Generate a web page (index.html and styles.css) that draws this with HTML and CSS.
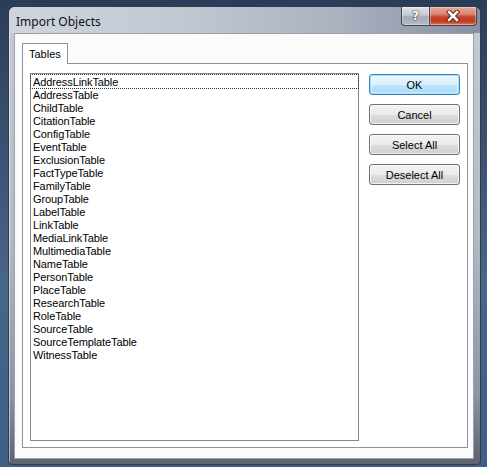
FILE: index.html
```html
<!DOCTYPE html>
<html lang="en">
<head>
  <meta charset="UTF-8">
  <meta name="viewport" content="width=device-width, initial-scale=1.0">
  <title>Import Objects</title>
  <link rel="stylesheet" href="styles.css">
</head>
<body>
  <div class="window">
    <div class="titlebar">
      <span class="title">Import Objects</span>
      <div class="caption-buttons">
        <div class="cap help">?</div>
        <div class="cap close">
          <svg width="14" height="12" viewBox="0 0 14 12">
            <path d="M3 2 L11 10 M11 2 L3 10" stroke="#4a1a10" stroke-width="4.4" stroke-linecap="square" fill="none"/>
            <path d="M3 2 L11 10 M11 2 L3 10" stroke="#ffffff" stroke-width="2.6" stroke-linecap="square" fill="none"/>
          </svg>
        </div>
      </div>
    </div>

    <div class="client">
      <div class="tabstrip">
        <div class="tab">Tables</div>
        <div class="tab-fill"></div>
      </div>
      <div class="panel">
        <ul class="list">
          <li class="focused">AddressLinkTable</li>
          <li>AddressTable</li>
          <li>ChildTable</li>
          <li>CitationTable</li>
          <li>ConfigTable</li>
          <li>EventTable</li>
          <li>ExclusionTable</li>
          <li>FactTypeTable</li>
          <li>FamilyTable</li>
          <li>GroupTable</li>
          <li>LabelTable</li>
          <li>LinkTable</li>
          <li>MediaLinkTable</li>
          <li>MultimediaTable</li>
          <li>NameTable</li>
          <li>PersonTable</li>
          <li>PlaceTable</li>
          <li>ResearchTable</li>
          <li>RoleTable</li>
          <li>SourceTable</li>
          <li>SourceTemplateTable</li>
          <li>WitnessTable</li>
        </ul>
        <div class="buttons">
          <button class="default">OK</button>
          <button>Cancel</button>
          <button>Select All</button>
          <button>Deselect All</button>
        </div>
      </div>
    </div>
  </div>
</body>
</html>
```

FILE: styles.css
```css
body {
  margin: 0;
  width: 487px;
  height: 467px;
  overflow: hidden;
  background: linear-gradient(to bottom, #2a3d58 0%, #48658a 60%, #3f5f88 100%);
  font-family: "Liberation Sans", Arial, sans-serif;
}
.window {
  box-sizing: border-box;
  width: 473px;
  height: 459px;
  margin: 6px 0 0 8px;
  border: 1px solid #353a48;
  border-radius: 7px 7px 4px 4px;
  padding: 0 6px 5px 5px;
  display: flex;
  flex-direction: column;
  background: linear-gradient(to bottom, #c6ccd6 0%, #b3bac6 50%, #8c93a2 85%, #5d6170 100%);
  box-shadow: inset 1px 1px 0 rgba(255, 255, 255, 0.5);
}
.titlebar {
  height: 26px;
  display: flex;
  justify-content: space-between;
  align-items: flex-start;
  margin: 0 -6px 0 -5px;
  padding: 0 3px 0 7px;
  border-radius: 6px 6px 0 0;
  background: linear-gradient(to right, #cfd5de 0%, #c2c9d3 35%, #aab2c0 70%, #8790a2 100%);
}
.title {
  font-family: "Noto Sans", "Open Sans", sans-serif;
  font-size: 12px;
  line-height: 16px;
  padding-top: 7px;
  color: #111;
}
.caption-buttons {
  display: flex;
}
.cap {
  height: 19px;
  box-sizing: border-box;
  border: 1px solid #3f4452;
  border-top: none;
  display: flex;
  align-items: center;
  justify-content: center;
  box-shadow: inset 0 0 0 1px rgba(255, 255, 255, 0.35);
}
.help {
  width: 28px;
  border-right: none;
  border-radius: 0 0 0 4px;
  background: linear-gradient(to bottom, #dfe3ea 0%, #c3c9d3 45%, #a3aab7 55%, #b6bcc7 100%);
  color: #fff;
  font-family: "DejaVu Sans", sans-serif;
  font-weight: bold;
  font-size: 12px;
  text-shadow: 0 0 2px #333, 0 0 1px #222;
}
.close {
  width: 48px;
  border-radius: 0 0 4px 0;
  background: linear-gradient(to bottom, #e9ab9b 0%, #d98470 40%, #c4432a 55%, #c23c22 80%, #e07a5e 100%);
}
.client {
  flex: 1;
  background: #fbfbfb;
  border: 1px solid #9aa1ad;
  padding: 9px 0 0 7px;
}
.tabstrip {
  display: flex;
  height: 21px;
  width: 446px;
}
.tab {
  box-sizing: border-box;
  width: 46px;
  height: 21px;
  border: 1px solid #8e929b;
  border-bottom: none;
  background: #fff;
  font-size: 11px;
  line-height: 20px;
  padding-left: 6px;
  color: #000;
}
.tab-fill {
  flex: 1;
  border-bottom: 1px solid #8e929b;
}
.panel {
  box-sizing: border-box;
  width: 446px;
  height: 384px;
  border: 1px solid #8e929b;
  border-top: none;
  background: #fff;
  padding: 9px 0 6px 7px;
  display: flex;
  align-items: flex-start;
}
.list {
  box-sizing: border-box;
  width: 329px;
  height: 368px;
  margin: 0;
  padding: 1px 0 0;
  list-style: none;
  border: 1px solid #828790;
  background: #fff;
}
.list li {
  height: 13px;
  line-height: 14px;
  padding-left: 2px;
  font-size: 11px;
  letter-spacing: -0.1px;
  color: #000;
}
.list li.focused {
  outline: 1px dotted #333;
  outline-offset: 0;
}
.buttons {
  display: flex;
  flex-direction: column;
  gap: 9px;
  margin-left: 10px;
  padding-top: 1px;
}
.buttons button {
  width: 91px;
  height: 21px;
  padding: 1px 0 0;
  font-family: "Liberation Sans", Arial, sans-serif;
  font-size: 11px;
  color: #000;
  border: 1px solid #707070;
  border-radius: 3px;
  background: linear-gradient(to bottom, #f2f2f2 0%, #ebebeb 50%, #dddddd 51%, #cfcfcf 100%);
  box-shadow: inset 0 0 0 1px rgba(255, 255, 255, 0.7);
}
.buttons button.default {
  border-color: #3c7fb1;
  box-shadow: inset 0 0 0 1px #9fe2fa, inset 0 0 0 2px rgba(255, 255, 255, 0.4);
  background: linear-gradient(to bottom, #eaf6fd 0%, #d9f0fc 50%, #bee6fd 51%, #a7d9f5 100%);
}
```
